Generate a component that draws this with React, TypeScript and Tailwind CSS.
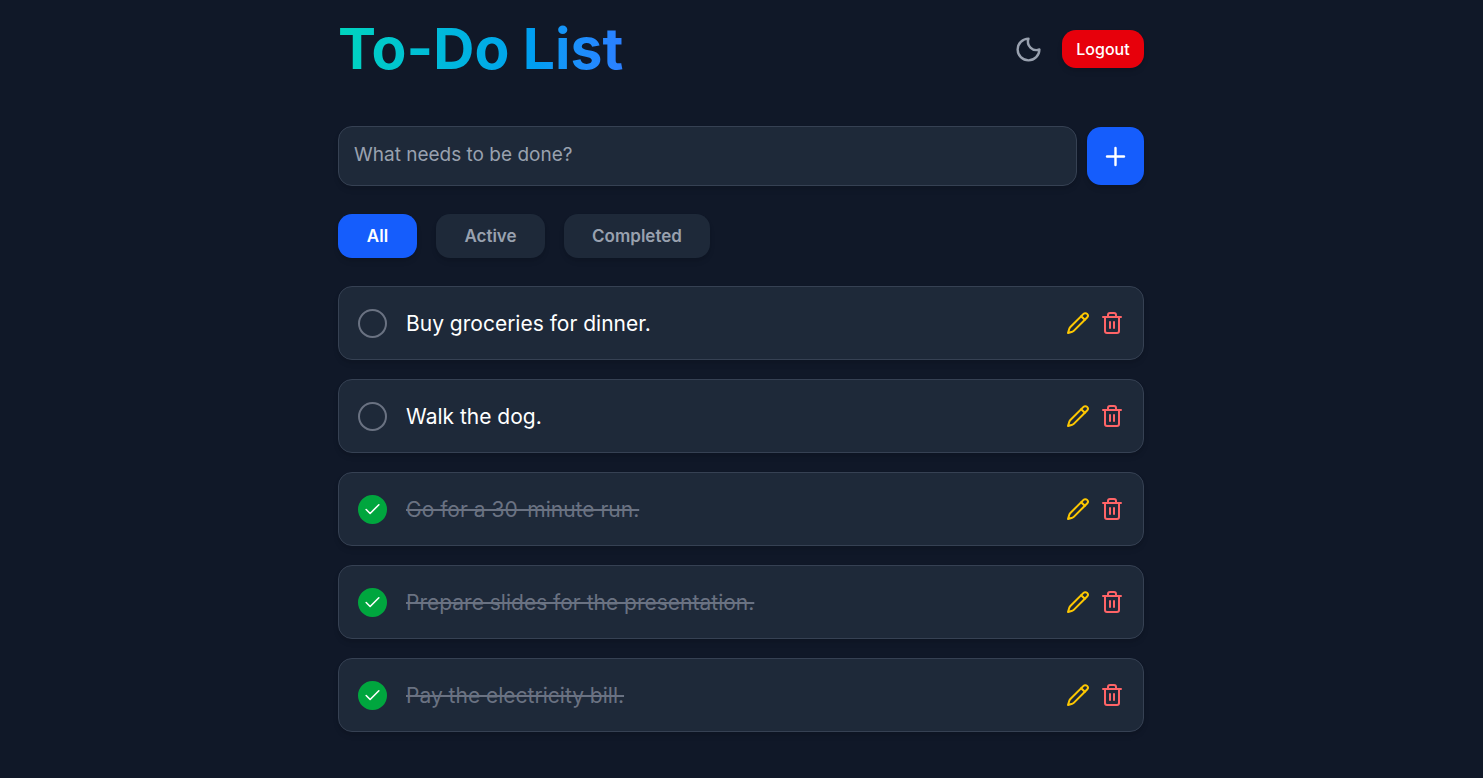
import { useState } from "react";
import type { FormEvent, ReactNode } from "react";

type Task = { id: number; text: string; done: boolean };

const initialTasks: Task[] = [
  { id: 1, text: "Buy groceries for dinner.", done: false },
  { id: 2, text: "Walk the dog.", done: false },
  { id: 3, text: "Go for a 30-minute run.", done: true },
  { id: 4, text: "Prepare slides for the presentation.", done: true },
  { id: 5, text: "Pay the electricity bill.", done: true },
];

const filters = [
  { name: "All", width: "min-w-[79px]" },
  { name: "Active", width: "min-w-[109px]" },
  { name: "Completed", width: "min-w-[146px]" },
];

function Icon({ className, children }: { className: string; children: ReactNode }) {
  return (
    <svg
      viewBox="0 0 24 24"
      fill="none"
      stroke="currentColor"
      strokeWidth={2}
      strokeLinecap="round"
      strokeLinejoin="round"
      aria-hidden="true"
      className={className}
    >
      {children}
    </svg>
  );
}

export default function App() {
  const [tasks, setTasks] = useState(initialTasks);
  const [filter, setFilter] = useState("All");
  const [draft, setDraft] = useState("");

  const addTask = (event: FormEvent) => {
    event.preventDefault();
    if (!draft.trim()) return;
    setTasks([{ id: Date.now(), text: draft.trim(), done: false }, ...tasks]);
    setDraft("");
  };

  const toggle = (id: number) =>
    setTasks(tasks.map((t) => (t.id === id ? { ...t, done: !t.done } : t)));

  const remove = (id: number) => setTasks(tasks.filter((t) => t.id !== id));

  const visible = tasks.filter(
    (t) => filter === "All" || (filter === "Completed") === t.done,
  );

  return (
    <div className="min-h-screen bg-gray-900 pt-5 pr-[21px] pb-11 pl-5 font-['Inter',sans-serif] text-white">
      <main className="mx-auto w-full max-w-[806px]">
        <header className="flex items-center justify-between">
          <h1 className="bg-linear-to-r from-teal-400 to-blue-500 bg-clip-text text-[57px] leading-[58px] font-bold text-transparent">
            To-Do List
          </h1>
          <div className="flex items-center gap-[19px]">
            <button type="button" aria-label="Toggle theme" className="text-gray-400">
              <Icon className="size-[29px]">
                <path d="M12 3a7 7 0 0 0 9 9 9 9 0 1 1-9-9Z" />
              </Icon>
            </button>
            <button
              type="button"
              className="h-[38px] w-[82px] rounded-[14px] bg-red-600 text-[16px] leading-5 font-medium text-white shadow-md"
            >
              Logout
            </button>
          </div>
        </header>

        <form onSubmit={addTask} className="mt-12 flex items-center gap-[10px]">
          <input
            type="text"
            aria-label="New task"
            placeholder="What needs to be done?"
            value={draft}
            onChange={(e) => setDraft(e.target.value)}
            className="h-[60px] min-w-0 flex-1 rounded-[14px] border border-gray-700 bg-gray-800 px-[15px] pb-1 text-[19px] text-white shadow-md outline-none placeholder:text-gray-400"
          />
          <button
            type="submit"
            aria-label="Add task"
            className="flex h-[58px] w-[57px] items-center justify-center rounded-[14px] bg-blue-600 text-white shadow-md"
          >
            <Icon className="size-[29px]">
              <path d="M5 12h14" />
              <path d="M12 5v14" />
            </Icon>
          </button>
        </form>

        <div className="mt-7 flex gap-[19px]">
          {filters.map(({ name, width }) => (
            <button
              key={name}
              type="button"
              onClick={() => setFilter(name)}
              className={`h-11 rounded-[14px] pb-px text-[17px] leading-5 font-semibold shadow-md ${width} ${
                filter === name ? "bg-blue-600 text-white" : "bg-gray-800 text-gray-400"
              }`}
            >
              {name}
            </button>
          ))}
        </div>

        <ul className="mt-7 flex flex-col gap-[19px]">
          {visible.map((task) => (
            <li
              key={task.id}
              className="flex h-[74px] items-center rounded-[14px] border border-gray-700 bg-gray-800 px-[19px] shadow-md"
            >
              <span className="grid shrink-0 place-items-center">
                <input
                  id={`task-${task.id}`}
                  type="checkbox"
                  checked={task.done}
                  onChange={() => toggle(task.id)}
                  className="col-start-1 row-start-1 size-[29px] appearance-none rounded-full border-2 border-gray-500 checked:border-green-600 checked:bg-green-600"
                />
                {task.done && (
                  <Icon className="pointer-events-none col-start-1 row-start-1 size-[19px] text-white">
                    <path d="M20 6 9 17l-5-5" />
                  </Icon>
                )}
              </span>
              <label
                htmlFor={`task-${task.id}`}
                className={`ml-[19px] flex-1 pt-0.5 text-[21px] leading-7 ${
                  task.done ? "text-gray-500 line-through" : "text-white"
                }`}
              >
                {task.text}
              </label>
              <div className="flex items-center gap-[10px]">
                <button type="button" aria-label={`Edit ${task.text}`} className="text-yellow-400">
                  <Icon className="size-6">
                    <path d="M17.5 2.9a2.5 2.5 0 0 1 3.6 3.6L8 19.6c-.5.5-1.1.8-1.7 1.1L2 22l1.3-4.3c.3-.6.6-1.2 1.1-1.7Z" />
                    <path d="m15.2 5.2 3.6 3.6" />
                  </Icon>
                </button>
                <button
                  type="button"
                  aria-label={`Delete ${task.text}`}
                  onClick={() => remove(task.id)}
                  className="text-red-400"
                >
                  <Icon className="size-6">
                    <path d="M3 6h18" />
                    <path d="M19 6v14c0 1-1 2-2 2H7c-1 0-2-1-2-2V6" />
                    <path d="M8 6V4c0-1 1-2 2-2h4c1 0 2 1 2 2v2" />
                    <path d="M10 11v6" />
                    <path d="M14 11v6" />
                  </Icon>
                </button>
              </div>
            </li>
          ))}
        </ul>
      </main>
    </div>
  );
}
